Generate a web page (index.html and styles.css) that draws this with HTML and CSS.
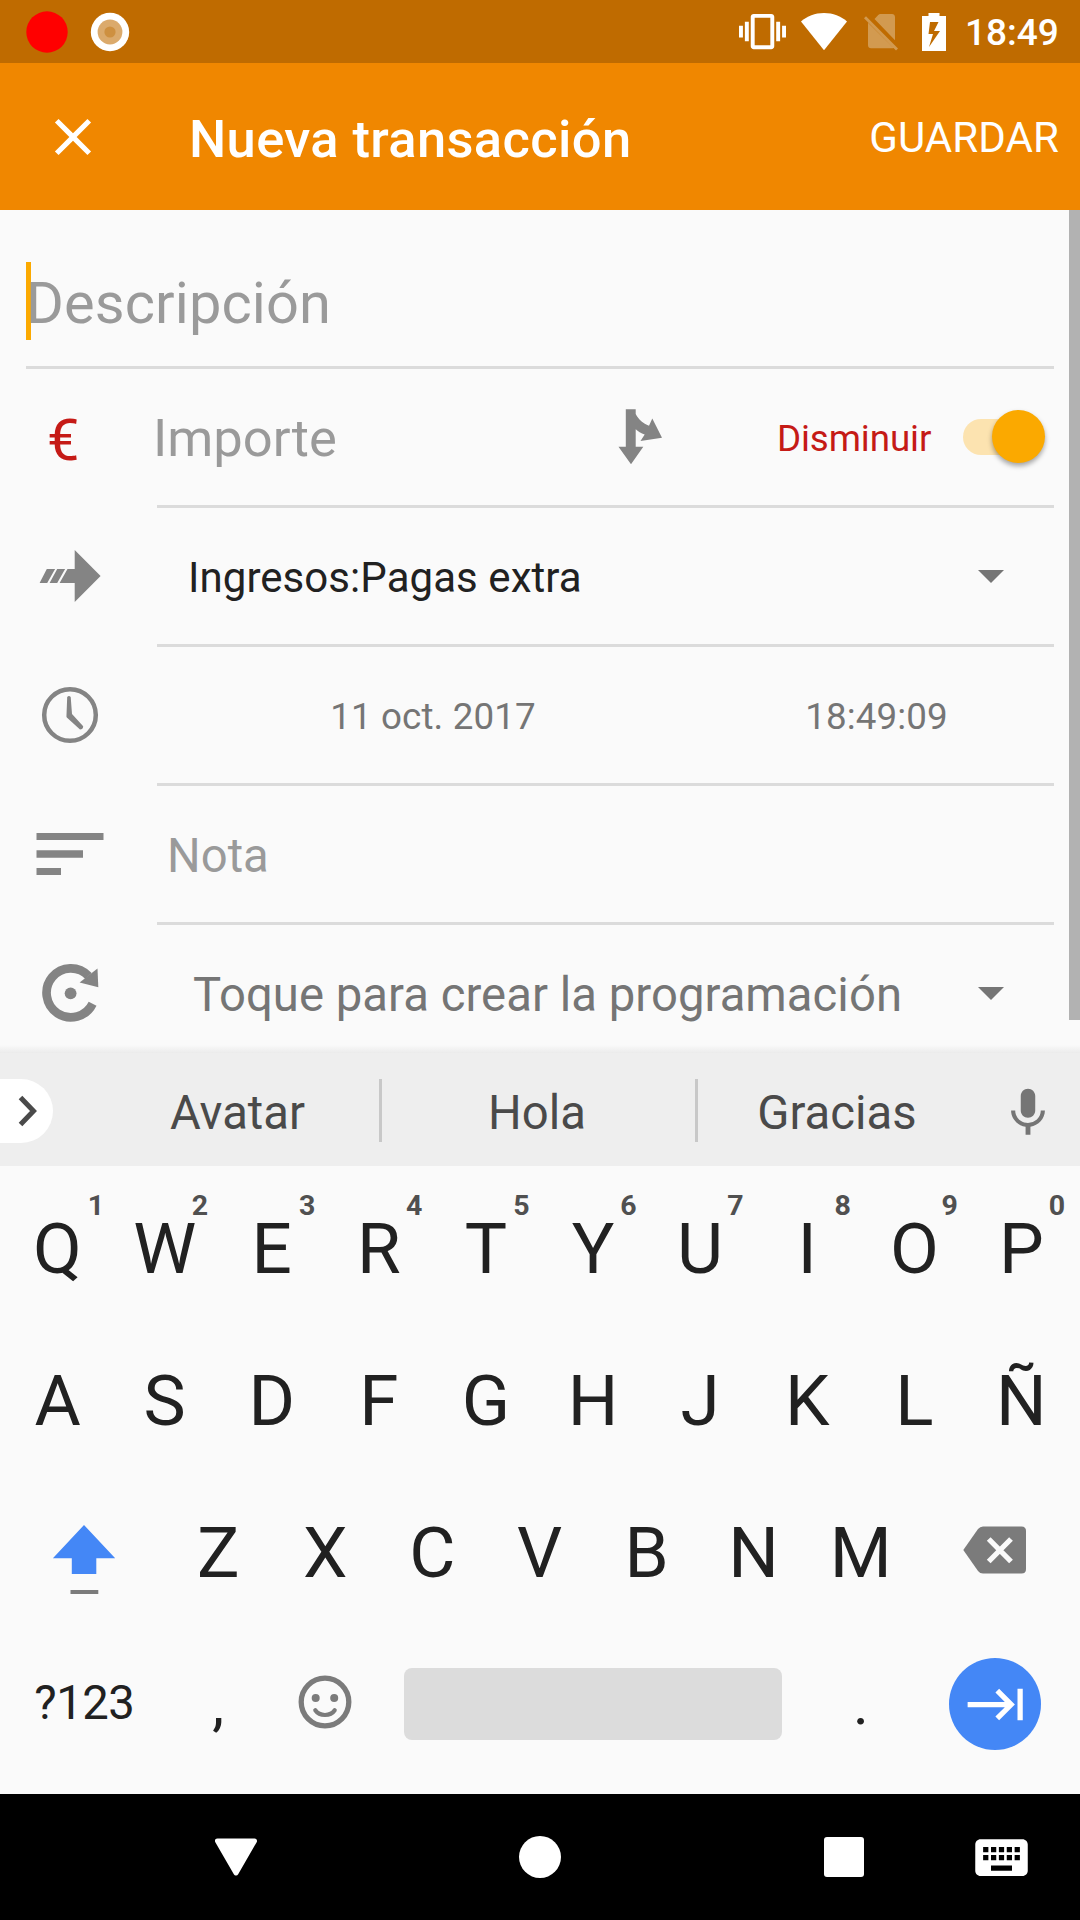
FILE: index.html
```html
<!DOCTYPE html>
<html lang="es">
<head>
<meta charset="utf-8">
<title>Nueva transacción</title>
<link rel="stylesheet" href="styles.css">
</head>
<body>
<div class="screen">
  <header class="status-bar">
    <svg class="status-record" width="42" height="42" viewBox="0 0 42 42"><circle cx="21" cy="21" r="20.7" fill="#f00"/></svg>
    <svg class="status-capture" width="40" height="40" viewBox="0 0 40 40"><circle cx="20" cy="20" r="19.2" fill="#fff"/><circle cx="20" cy="20" r="12.4" fill="#dbaa6c"/><circle cx="20" cy="20" r="5.6" fill="#ce9040"/></svg>
    <div class="status-right">
      <svg class="status-vibrate" width="47" height="47" viewBox="0 0 24 24"><path fill="#fff" d="M0 15h2V9H0v6zm3 2h2V7H3v10zm19-8v6h2V9h-2zm-3 8h2V7h-2v10zM16.500 3h-9C6.670 3 6 3.670 6 4.500v15c0 .830.670 1.500 1.500 1.500h9c.830 0 1.500-.670 1.500-1.500v-15c0-.830-.670-1.500-1.500-1.500zM16 19H8V5h8v14z"/></svg>
      <svg class="status-wifi" width="46" height="38" viewBox="0 0 46 38"><path fill="#fff" d="M0 8.500C6 3.200 14 0 23 0s17 3.200 23 8.500L23 37.300z"/></svg>
      <svg class="status-sim" width="36" height="38" viewBox="0 0 36 38"><path fill="#d29a50" d="M10.500 5L14 1.200C14.700.400 15.600 0 16.600 0H28c1.700 0 3 1.300 3 3v23.300zM4 8.800L29.500 34c-.4.200-1 .3-1.500.3H7c-1.700 0-3-1.300-3-3zM2 2.200L0 4.300l32 32.300 2-2.100z"/></svg>
      <svg class="status-battery" width="24" height="38" viewBox="0 0 24 38"><path fill="#fff" fill-rule="evenodd" d="M6.500 0h11v3H24v35H0V3h6.500zM8 9L6.500 21H11L7 34l11-16h-6l4.500-9z"/></svg>
      <span class="status-time">18:49</span>
    </div>
  </header>

  <div class="app-bar">
    <svg class="close-icon" width="62" height="62" viewBox="0 0 24 24"><path fill="#fff" d="M19 6.410L17.590 5 12 10.590 6.410 5 5 6.410 10.590 12 5 17.590 6.410 19 12 13.410 17.590 19 19 17.590 13.410 12z"/></svg>
    <h1 class="app-title">Nueva transacción</h1>
    <span class="save">GUARDAR</span>
  </div>

  <main class="form">
    <div class="description"><span class="cursor"></span><span class="description-hint">Descripción</span></div>

    <div class="row">
      <div class="lead"><span class="currency">€</span></div>
      <div class="field amount">
        <span class="amount-hint">Importe</span>
        <svg class="split-icon" width="46" height="56" viewBox="618 409 46 56"><path fill="#848484" d="M625.800 409.300H635.700V414C639 420 643 423.500 649 425.700L652.300 418.500 662 437.800 640.500 441 644.700 434.500C641 433.500 638 431.500 635.700 429.300V446.700H643.300L631 464.300 618.500 446.700H625.800z"/></svg>
        <span class="type-label">Disminuir</span>
        <span class="switch"><span class="thumb"></span></span>
      </div>
    </div>

    <div class="row">
      <div class="lead"><svg class="transfer-icon" width="62" height="54" viewBox="39 549 62 54"><path fill="#848484" d="M74.700 550L100.600 576 74.700 602V583H59.600L67.500 569H74.700zM46.800 569H55.100L47.200 583H39.600zM57.200 569H65.100L57.200 583H49.600z"/></svg></div>
      <div class="field">
        <span class="account">Ingresos:Pagas extra</span>
        <svg class="caret" width="26" height="13" viewBox="0 0 26 13"><path fill="#757575" d="M0 0h26L13 13z"/></svg>
      </div>
    </div>

    <div class="row">
      <div class="lead"><svg class="clock-icon" width="58" height="58" viewBox="41 686 58 58"><circle cx="70" cy="715" r="25.800" fill="none" stroke="#848484" stroke-width="4.500"/><path fill="#848484" d="M67.200 697Q69 695 70.700 697L72 714 83.200 726.300Q83 729.500 80 729.500L66.800 717.500Q66.200 716.500 66.500 715z"/></svg></div>
      <div class="field datetime"><span class="date">11 oct. 2017</span><span class="time">18:49:09</span></div>
    </div>

    <div class="row">
      <div class="lead"><svg class="notes-icon" width="68" height="42" viewBox="0 0 68 42"><path fill="#848484" d="M.500 0H67.500V7H.500zM.500 17.200H47V24.700H.500zM.500 35H25V42H.500z"/></svg></div>
      <div class="field"><span class="note-hint">Nota</span></div>
    </div>

    <div class="row last">
      <div class="lead"><svg class="repeat-icon" width="58" height="60" viewBox="41 963 58 60"><path fill="none" stroke="#848484" stroke-width="8.700" d="M92.600 1003.800A24.300 24.500 0 1 1 88.500 976"/><path fill="#848484" d="M97.500 968.500L98.300 987.200 79.600 982.500z"/><circle cx="70.600" cy="993.300" r="5.900" fill="#848484"/></svg></div>
      <div class="field">
        <span class="schedule">Toque para crear la programación</span>
        <svg class="caret" width="26" height="13" viewBox="0 0 26 13"><path fill="#757575" d="M0 0h26L13 13z"/></svg>
      </div>
    </div>
    <div class="scrollbar"></div>
  </main>

  <section class="suggestions">
    <div class="expand"><svg width="20" height="32" viewBox="0 0 20 32"><path fill="none" stroke="#4a4a4a" stroke-width="5" d="M2.500 2.500L15.500 16 2.500 29.500"/></svg></div>
    <span class="word first">Avatar</span>
    <span class="word">Hola</span>
    <span class="word third">Gracias</span>
    <svg class="mic" width="58" height="58" viewBox="0 0 24 24"><path fill="#757575" d="M12 14c1.660 0 2.990-1.340 2.990-3L15 5c0-1.660-1.340-3-3-3S9 3.340 9 5v6c0 1.660 1.340 3 3 3zm5.300-3c0 3-2.540 5.100-5.300 5.100S6.700 14 6.700 11H5c0 3.410 2.720 6.230 6 6.720V21h2v-3.280c3.280-.480 6-3.300 6-6.720h-1.700z"/></svg>
  </section>

  <section class="keyboard">
    <div class="keys">
      <span class="key">Q<sup class="alt alt-one">1</sup></span><span class="key">W<sup class="alt">2</sup></span><span class="key">E<sup class="alt">3</sup></span><span class="key">R<sup class="alt">4</sup></span><span class="key">T<sup class="alt">5</sup></span><span class="key">Y<sup class="alt">6</sup></span><span class="key">U<sup class="alt">7</sup></span><span class="key">I<sup class="alt">8</sup></span><span class="key">O<sup class="alt">9</sup></span><span class="key">P<sup class="alt">0</sup></span>
    </div>
    <div class="keys">
      <span class="key">A</span><span class="key">S</span><span class="key">D</span><span class="key">F</span><span class="key">G</span><span class="key">H</span><span class="key">J</span><span class="key">K</span><span class="key">L</span><span class="key">Ñ</span>
    </div>
    <div class="keys">
      <span class="key wide"><svg class="shift-icon" width="64" height="70" viewBox="52.500 1525 64 70"><path fill="#4487f6" d="M84.500 1525L115.700 1558.300H96.800V1574H72.300V1558.300H53.400z"/><path fill="#7b7b7b" d="M71 1590H98.800V1594H71z"/></svg></span>
      <span class="key">Z</span><span class="key">X</span><span class="key">C</span><span class="key">V</span><span class="key">B</span><span class="key">N</span><span class="key">M</span>
      <span class="key wide"><svg class="delete-icon" width="64" height="48" viewBox="963 1525.500 64 48"><path fill="#7b7b7b" d="M983 1526H1021.500Q1026 1526 1026 1530.500V1568.500Q1026 1573 1021.500 1573H983Q980 1573 978 1570.500L963.300 1549.500 978 1528.500Q980 1526 983 1526z"/><path fill="none" stroke="#fafafa" stroke-width="5.300" d="M988.700 1538.500L1011 1561M1011 1538.500L988.700 1561"/></svg></span>
    </div>
    <div class="keys bottom-keys">
      <span class="key wide symbols">?123</span>
      <span class="key punct">,</span>
      <span class="key"><svg class="emoji-icon" width="54" height="54" viewBox="0 0 54 54"><circle cx="27" cy="27" r="23.800" fill="none" stroke="#7b7b7b" stroke-width="5.300"/><circle cx="17.700" cy="23" r="4" fill="#7b7b7b"/><circle cx="36.200" cy="23" r="4" fill="#7b7b7b"/><path fill="none" stroke="#7b7b7b" stroke-width="4.200" stroke-linecap="round" d="M17.300 35.300Q20.500 40 27 40T36.700 35.300"/></svg></span>
      <span class="space"></span>
      <span class="key punct">.</span>
      <span class="key wide"><span class="enter"><svg width="63" height="63" viewBox="0 0 24 24"><path fill="#fff" d="M11.590 7.410L15.170 11H1v2h14.170l-3.590 3.590L13 18l6-6-6-6-1.410 1.410zM20 6v12h2V6h-2z"/></svg></span></span>
    </div>
  </section>

  <nav class="nav-bar">
    <svg class="nav-back" width="42" height="38" viewBox="0 0 42 38"><path fill="#fff" stroke="#fff" stroke-width="5" stroke-linejoin="round" d="M2.500 2.900H39.500L21 35z"/></svg>
    <span class="nav-home"></span>
    <span class="nav-recent"></span>
    <svg class="nav-ime" width="63" height="63" viewBox="0 0 24 24"><path fill="#fff" d="M20 5H4c-1.100 0-1.990.900-1.990 2L2 17c0 1.100.900 2 2 2h16c1.100 0 2-.900 2-2V7c0-1.100-.900-2-2-2zm-9 3h2v2h-2V8zm0 3h2v2h-2v-2zM8 8h2v2H8V8zm0 3h2v2H8v-2zm-1 2H5v-2h2v2zm0-3H5V8h2v2zm9 7H8v-2h8v2zm0-4h-2v-2h2v2zm0-3h-2V8h2v2zm3 3h-2v-2h2v2zm0-3h-2V8h2v2z"/></svg>
  </nav>
</div>
</body>
</html>
```
FILE: styles.css
```css
* { box-sizing: border-box; }
body { margin: 0; overflow: hidden; font-family: Roboto, "Liberation Sans", sans-serif; }
svg { display: block; flex: none; }
.screen {
  display: flex;
  flex-direction: column;
  width: 1080px;
  height: 1920px;
  background: #fafafa;
}

/* status bar */
.status-bar { display: flex; align-items: center; height: 63px; background: #bf6b00; }
.status-record { margin-left: 26px; }
.status-capture { margin-left: 22px; }
.status-right { display: flex; align-items: center; margin-left: auto; padding-right: 22px; }
.status-wifi { margin-left: 15px; }
.status-sim { margin: 2px 0 0 17px; }
.status-battery { margin-left: 22px; }
.status-time { margin: 3px 0 0 19px; width: 93px; color: #fff; font-size: 37px; font-weight: 500; line-height: 44px; text-align: right; }

/* app bar */
.app-bar { display: flex; align-items: center; height: 147px; padding: 0 21px 0 42px; background: #f08700; color: #fff; }
.app-title { margin: 4px 0 0 85px; font-size: 52.500px; font-weight: 500; line-height: 64px; letter-spacing: .36px; }
.save { margin: 2px 0 0 auto; font-size: 42px; line-height: 50px; letter-spacing: .1px; }

/* form */
.form { position: relative; height: 843px; overflow: hidden; }
.form::after {
  content: "";
  position: absolute;
  inset: auto 0 0;
  height: 8px;
  background: linear-gradient(#fafafa, #ebebeb);
}
.scrollbar { position: absolute; top: 0; right: 0; width: 11px; height: 810px; background: #b2b2b2; }
.description { position: relative; width: 1028px; height: 159px; margin-left: 26px; padding-top: 54px; border-bottom: 3px solid #dbdbdb; color: #9a9a9a; font-size: 57.750px; line-height: 78px; letter-spacing: .12px; }
.cursor { position: absolute; top: 52px; left: 0; width: 5px; height: 78px; background: #fba900; }
.description-hint { position: relative; }
.row { display: grid; grid-template-columns: 157px 897px; height: 139px; line-height: 60px; }
.lead { display: flex; align-items: flex-start; }
.field { display: flex; align-items: flex-start; padding-top: 40px; border-bottom: 3px solid #dbdbdb; }
.last .field { border-bottom: 0; }
.currency { margin: 41px 0 0 47px; color: #c51a16; font-size: 57.750px; }
.amount-hint { width: 465px; margin: -1px 0 0 -4px; color: #9a9a9a; font-size: 52.500px; }
.split-icon { margin-top: 0; }
.type-label { margin: 0 0 0 113px; color: #c51a16; font-size: 36.750px; letter-spacing: -.1px; }
.switch { position: relative; width: 74px; height: 36px; margin: 10px 17px 0 auto; border-radius: 18px; background: #fce3b0; }
.thumb { position: absolute; top: -9px; right: -8px; width: 53px; height: 53px; border-radius: 50%; background: #fba900; box-shadow: 0 3px 5px rgba(0, 0, 0, .35); }
.transfer-icon { margin: 41px 0 0 39px; }
.account { margin-left: 31px; color: #212121; font-size: 42px; letter-spacing: .06px; }
.caret { margin: 22px 50px 0 auto; }
.clock-icon { margin: 39px 0 0 41px; }
.datetime { color: #757575; font-size: 36.750px; letter-spacing: .12px; }
.date { width: 552px; text-align: center; }
.time { width: 335px; text-align: center; }
.notes-icon { margin: 47px 0 0 36px; }
.note-hint { margin-left: 10px; color: #9a9a9a; font-size: 47.250px; }
.repeat-icon { margin: 38px 0 0 41px; }
.schedule { margin-left: 36px; color: #757575; font-size: 47.250px; letter-spacing: .04px; }

/* suggestion strip */
.suggestions { display: grid; grid-template-columns: 96px 286px 316px 282px 100px; align-items: center; height: 113px; padding-top: 2px; background: #eee; }
.expand { display: flex; align-items: center; width: 52.500px; height: 64px; padding-left: 18px; border-radius: 0 32px 32px 0; background: #fff; }
.word { height: 63px; border-right: 3px solid #c8c8c8; color: #4a4a4a; font-size: 47.250px; line-height: 68px; text-align: center; }
.word:nth-of-type(2) { padding-right: 3px; }
.word.third { padding-right: 4px; border-right: 0; }
.mic { margin: 5px 0 0 19px; }

/* keyboard */
.keyboard { height: 628px; padding: 7px 5px 0 4px; color: #212121; }
.keys { display: grid; grid-template-columns: repeat(20, 1fr); height: 152px; }
.key { position: relative; display: flex; grid-column: span 2; align-items: center; justify-content: center; font-size: 71px; line-height: 152px; }
.wide { grid-column: span 3; }
.alt { position: absolute; top: 19px; right: 10px; color: #505050; font-size: 28.500px; font-weight: 700; line-height: 28px; }
.alt-one { right: 7px; }
.shift-icon { margin-top: 14px; }
.delete-icon { margin-top: -6px; }
.bottom-keys { margin-top: -1px; }
.symbols { font-size: 47.250px; line-height: 150px; letter-spacing: -.5px; padding-bottom: 2px; }
.punct { font-size: 60px; }
.emoji-icon { margin-top: -4px; }
.space { grid-column: span 8; align-self: center; height: 72px; margin: 0 25px; border-radius: 8px; background: #dcdcdc; }
.enter { display: flex; align-items: center; justify-content: center; width: 92px; height: 92px; padding-left: 3px; border-radius: 50%; background: #4487f6; }

/* navigation bar */
.nav-bar { display: grid; grid-template-columns: 215px 304px 305px 146px 110px; align-items: center; height: 126px; background: #000; }
.nav-back { grid-column: 2; }
.nav-home { width: 42px; height: 42px; border-radius: 50%; background: #fff; }
.nav-recent { width: 40px; height: 40px; border-radius: 3px; background: #fff; }
```
